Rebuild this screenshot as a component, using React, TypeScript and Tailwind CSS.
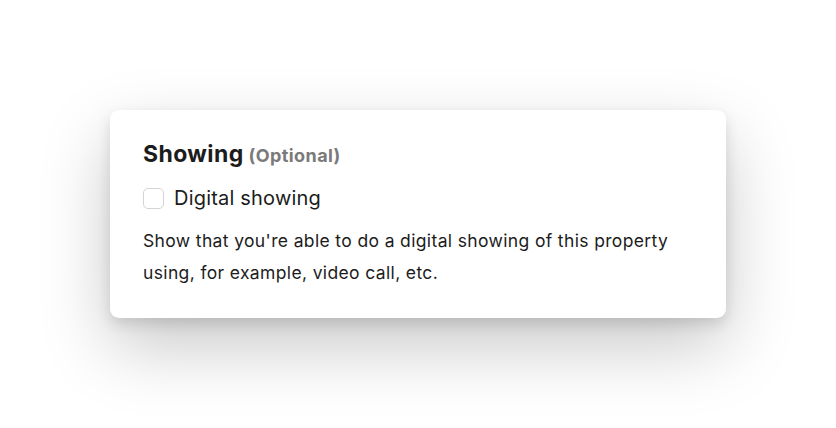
export default function App() {
  return (
    <div className="min-h-screen w-full bg-white flex items-center justify-center font-['Inter',sans-serif]">
      <div className="w-[616px] h-[208px] bg-white rounded-[9px] shadow-[0_28px_70px_rgba(0,0,0,0.22),0_6px_14px_rgba(0,0,0,0.12)] pl-[33px] pr-8 pt-[30px]">
        <h2 className="flex items-baseline gap-[5px] leading-[28px] text-[#1c1c1c]">
          <span className="text-[23px] font-bold tracking-[0.4px]">Showing</span>
          <span className="text-[18px] font-bold tracking-[0.4px] text-[#7a7a7a]">(Optional)</span>
        </h2>
        <label className="mt-[16px] h-[24px] flex items-center gap-[10px]">
          <span className="w-[21px] h-[21px] rounded-[5px] border-[1.5px] border-[#d4d4d4] bg-white" />
          <span className="text-[20px] leading-[24px] tracking-[0.2px] text-[#1c1c1c]">Digital showing</span>
        </label>
        <p className="mt-[15px] text-[17.5px] leading-[31.5px] tracking-[0.36px] text-[#1c1c1c]">
          Show that you're able to do a digital showing of this property
          <br />
          using, for example, video call, etc.
        </p>
      </div>
    </div>
  );
}
